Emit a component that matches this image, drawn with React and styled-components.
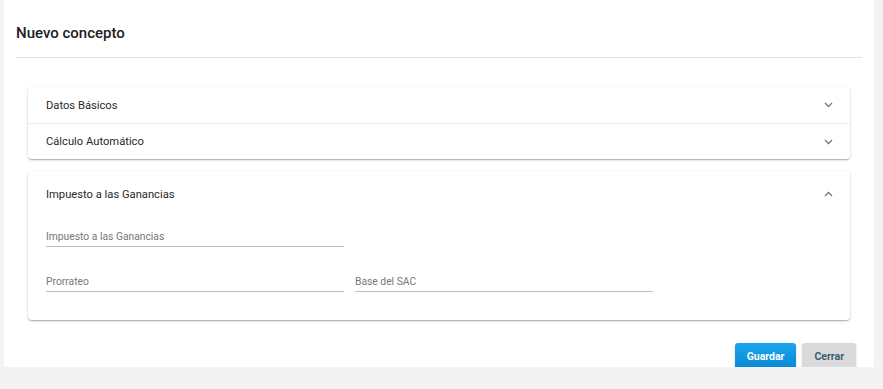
import React from "react";
import styled, { createGlobalStyle } from "styled-components";

const GlobalStyle = createGlobalStyle`
  html, body {
    margin: 0;
    padding: 0;
    background: #f3f3f3;
    font-family: Roboto, "Liberation Sans", Arial, sans-serif;
  }
`;

const Panel = styled.div`
  margin-left: 4px;
  width: 870px;
  background: #fff;
  padding: 0 12px;
  box-sizing: border-box;
`;

const Header = styled.div`
  height: 58px;
  box-sizing: border-box;
  padding-top: 24px;
  border-bottom: 1px solid #e2e2e2;
`;

const Title = styled.h2`
  margin: 0;
  font-size: 15px;
  line-height: 19px;
  font-weight: 500;
  color: #212121;
`;

const Cards = styled.div`
  margin: 29px 12px 0;
  display: flex;
  flex-direction: column;
  gap: 12px;
`;

const Card = styled.div`
  background: #fff;
  border-radius: 4px;
  box-shadow: 0 1px 3px rgba(0, 0, 0, 0.18), 0 1px 1px rgba(0, 0, 0, 0.12),
    0 2px 1px -1px rgba(0, 0, 0, 0.1);
`;

const Row = styled.div`
  height: ${(p) => p.$h || 36}px;
  box-sizing: border-box;
  display: flex;
  align-items: center;
  justify-content: space-between;
  padding: 0 17px 0 18px;
  font-size: 11.2px;
  color: #2a2a2a;
  & + & {
    border-top: 1px solid #ececec;
  }
`;

const Chevron = ({ up }) => (
  <svg width="9" height="6" viewBox="0 0 9 6">
    <path
      d={up ? "M1 5 L4.5 1.5 L8 5" : "M1 1 L4.5 4.5 L8 1"}
      fill="none"
      stroke="#7a7a7a"
      strokeWidth="1.4"
    />
  </svg>
);

const Fields = styled.div`
  display: grid;
  grid-template-columns: 298px 298px;
  column-gap: 11px;
  row-gap: 28px;
  padding: 13px 18px 28px;
`;

const Field = styled.div`
  font-size: 10.3px;
  line-height: 14px;
  color: #777;
  padding-bottom: 2px;
  border-bottom: 1px solid #bdbdbd;
`;

const Spacer = styled.div``;

const Footer = styled.div`
  display: flex;
  justify-content: flex-end;
  gap: 6px;
  margin-top: 23px;
  margin-bottom: -3px;
  padding-right: 6px;
`;

const Button = styled.button`
  height: 27px;
  border: none;
  border-radius: 3px;
  padding: 0 12px;
  font-family: Roboto, "Liberation Sans", Arial, sans-serif;
  font-size: 10.5px;
  font-weight: 700;
  color: ${(p) => (p.$primary ? "#fff" : "#3a5c72")};
  background: ${(p) =>
    p.$primary ? "linear-gradient(#1aa6ec, #0a86d2)" : "#dadada"};
  box-shadow: 0 1px 2px rgba(0, 0, 0, 0.22);
`;

export default function App() {
  return (
    <>
      <GlobalStyle />
      <Panel>
        <Header>
          <Title>Nuevo concepto</Title>
        </Header>
        <Cards>
          <Card>
            <Row $h={36}>
              Datos Básicos
              <Chevron />
            </Row>
            <Row $h={36}>
              Cálculo Automático
              <Chevron />
            </Row>
          </Card>
          <Card>
            <Row $h={46}>
              Impuesto a las Ganancias
              <Chevron up />
            </Row>
            <Fields>
              <Field>Impuesto a las Ganancias</Field>
              <Spacer />
              <Field>Prorrateo</Field>
              <Field>Base del SAC</Field>
            </Fields>
          </Card>
        </Cards>
        <Footer>
          <Button $primary>Guardar</Button>
          <Button>Cerrar</Button>
        </Footer>
      </Panel>
    </>
  );
}
